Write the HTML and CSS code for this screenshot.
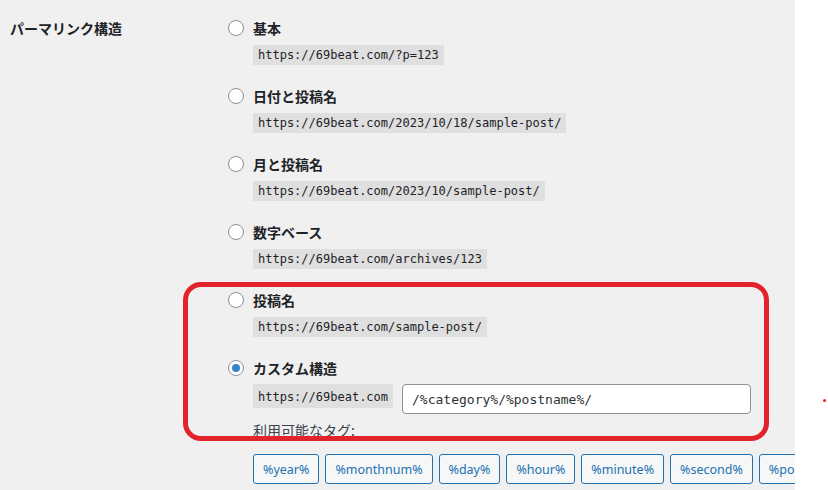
FILE: index.html
```html
<!DOCTYPE html>
<html lang="ja">
<head>
<meta charset="utf-8">
<title>パーマリンク構造</title>
<link rel="stylesheet" href="styles.css">
</head>
<body>
<div class="page">
  <div class="panel">
    <div class="row">
      <div class="th">パーマリンク構造</div>
      <div class="td">
        <div class="option">
          <label class="opt-label"><span class="radio"></span><span>基本</span></label>
          <code class="code">https://69beat.com/?p=123</code>
        </div>
        <div class="option">
          <label class="opt-label"><span class="radio"></span><span>日付と投稿名</span></label>
          <code class="code">https://69beat.com/2023/10/18/sample-post/</code>
        </div>
        <div class="option">
          <label class="opt-label"><span class="radio"></span><span>月と投稿名</span></label>
          <code class="code">https://69beat.com/2023/10/sample-post/</code>
        </div>
        <div class="option">
          <label class="opt-label"><span class="radio"></span><span>数字ベース</span></label>
          <code class="code">https://69beat.com/archives/123</code>
        </div>
        <div class="option">
          <label class="opt-label"><span class="radio"></span><span>投稿名</span></label>
          <code class="code">https://69beat.com/sample-post/</code>
        </div>
        <div class="option custom">
          <label class="opt-label"><span class="radio checked"></span><span>カスタム構造</span></label>
          <div class="custom-row">
            <code class="code tall">https://69beat.com</code>
            <input class="struct-input" type="text" value="/%category%/%postname%/">
          </div>
          <div class="tags-label">利用可能なタグ:</div>
          <div class="tags">
            <button class="tag">%year%</button>
            <button class="tag">%monthnum%</button>
            <button class="tag">%day%</button>
            <button class="tag">%hour%</button>
            <button class="tag">%minute%</button>
            <button class="tag">%second%</button>
            <button class="tag">%post_id%</button>
          </div>
        </div>
      </div>
    </div>
    <div class="highlight"></div>
  </div>
  <div class="dot"></div>
</div>
</body>
</html>
```
FILE: styles.css
```css
* { box-sizing: border-box; }
html, body {
  margin: 0;
  padding: 0;
  background: #ffffff;
}
.page {
  position: relative;
  width: 828px;
  height: 490px;
  overflow: hidden;
}
.panel {
  position: relative;
  width: 795px;
  height: 490px;
  background: #f0f0f1;
  overflow: hidden;
  font-family: "Noto Sans CJK JP", "Noto Sans", sans-serif;
  color: #1d2327;
}
.row {
  display: flex;
  padding-top: 18px;
}
.th {
  width: 228px;
  flex: none;
  padding-left: 10px;
  font-size: 14px;
  font-weight: 700;
  line-height: 20px;
}
.td {
  flex: 1;
  min-width: 0;
}
.option {
  margin-bottom: 21px;
}
.opt-label {
  display: flex;
  align-items: center;
  height: 20px;
  font-size: 14px;
  font-weight: 700;
  line-height: 20px;
}
.radio {
  width: 16px;
  height: 16px;
  border: 1px solid #8c8f94;
  border-radius: 50%;
  background: #fff;
  margin-right: 9px;
  display: flex;
  align-items: center;
  justify-content: center;
  flex: none;
}
.radio.checked::after {
  content: "";
  width: 8px;
  height: 8px;
  border-radius: 50%;
  background: #3582c4;
}
.code {
  display: inline-block;
  margin: 7px 0 0 25px;
  height: 20px;
  line-height: 20px;
  padding: 0 5px;
  background: rgba(0, 0, 0, 0.07);
  font-family: "DejaVu Sans Mono", "Liberation Mono", monospace;
  font-size: 12px;
  color: #1d2327;
}
.custom-row {
  display: flex;
  align-items: flex-start;
  margin-top: 6px;
  margin-left: 25px;
}
.code.tall {
  margin: 0;
  height: 24px;
  line-height: 26px;
}
.struct-input {
  margin-left: 9px;
  width: 349px;
  height: 30px;
  border: 1px solid #8c8f94;
  border-radius: 4px;
  background: #fff;
  padding: 0 9px;
  font-family: "DejaVu Sans Mono", "Liberation Mono", monospace;
  font-size: 13px;
  color: #2c3338;
}
.tags-label {
  margin: 6px 0 0 25px;
  font-size: 14px;
  line-height: 20px;
  color: #3c434a;
}
.tags {
  display: flex;
  gap: 6px;
  margin: 14px 0 0 25px;
}
.tag {
  flex: none;
  height: 30px;
  padding: 0 9px;
  border: 1px solid #2271b1;
  border-radius: 3px;
  background: #f6f7f7;
  color: #2271b1;
  font-family: "Noto Sans", sans-serif;
  font-size: 12.5px;
  font-weight: 400;
  white-space: nowrap;
}
.highlight {
  position: absolute;
  left: 183px;
  top: 282px;
  width: 586px;
  height: 159px;
  border: 5px solid #e3232b;
  border-radius: 18px;
  pointer-events: none;
}
.dot {
  position: absolute;
  left: 823px;
  top: 399px;
  width: 3px;
  height: 3px;
  border-radius: 50%;
  background: #e3232b;
}
```
